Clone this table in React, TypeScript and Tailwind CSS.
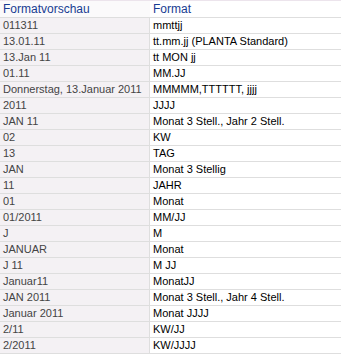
import React from "react";

const rows: [string, string][] = [
  ["011311", "mmttjj"],
  ["13.01.11", "tt.mm.jj (PLANTA Standard)"],
  ["13.Jan 11", "tt MON jj"],
  ["01.11", "MM.JJ"],
  ["Donnerstag, 13.Januar 2011", "MMMMM,TTTTTT, jjjj"],
  ["2011", "JJJJ"],
  ["JAN 11", "Monat 3 Stell., Jahr 2 Stell."],
  ["02", "KW"],
  ["13", "TAG"],
  ["JAN", "Monat 3 Stellig"],
  ["11", "JAHR"],
  ["01", "Monat"],
  ["01/2011", "MM/JJ"],
  ["J", "M"],
  ["JANUAR", "Monat"],
  ["J 11", "M JJ"],
  ["Januar11", "MonatJJ"],
  ["JAN 2011", "Monat 3 Stell., Jahr 4 Stell."],
  ["Januar 2011", "Monat JJJJ"],
  ["2/11", "KW/JJ"],
  ["2/2011", "KW/JJJJ"],
];

export default function App() {
  return (
    <div
      className="w-[341px] h-[355px] bg-white overflow-hidden text-[11px] leading-[15px]"
      style={{ fontFamily: '"Liberation Sans", Arial, sans-serif' }}
    >
      <div className="flex h-[18px] border-t border-b border-t-[#ece4ec] border-b-[#dedede]">
        <div className="w-[149px] pl-[3px] text-[12px] text-[#183c92] leading-[16px] bg-[#fbfafb]">Formatvorschau</div>
        <div className="flex-1 pl-[3px] text-[12px] text-[#183c92] leading-[16px] border-l border-[#fbfafb]">Format</div>
      </div>
      {rows.map(([a, b], i) => (
        <div key={i} className="flex h-[16px] border-b border-[#dedede]">
          <div className="w-[149px] pl-[3px] text-[#444444] bg-[#f4f1f4] whitespace-nowrap overflow-hidden">{a}</div>
          <div className="flex-1 pl-[3px] text-black border-l border-[#dedede] whitespace-nowrap overflow-hidden">{b}</div>
        </div>
      ))}
    </div>
  );
}
